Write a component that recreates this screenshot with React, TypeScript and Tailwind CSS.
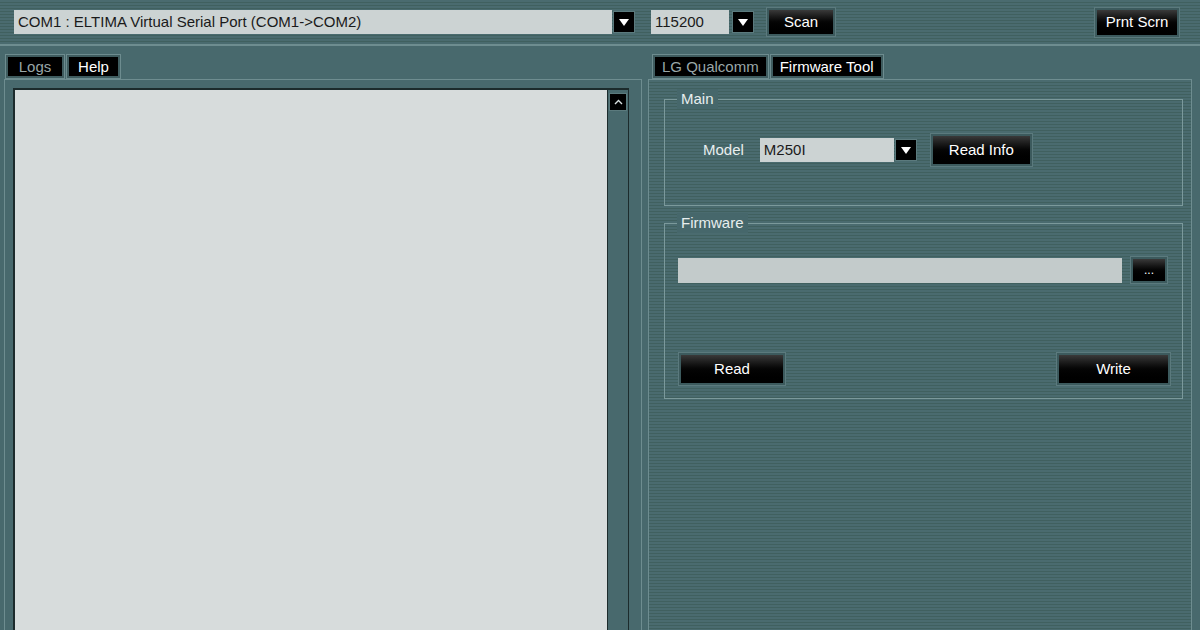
import { ReactNode } from "react";

const stripes =
  "bg-[repeating-linear-gradient(180deg,#4a6b6f_0px,#4a6b6f_2px,#40605f_2px,#40605f_3px)]";

function BlackButton({ children, className = "" }: { children: ReactNode; className?: string }) {
  return (
    <div className={`flex items-center justify-center border border-[#5b7a7d] p-[2px] bg-[#3c5a5d] ${className}`}>
      <div className="flex h-full w-full items-center justify-center bg-gradient-to-b from-[#3a3a3a] via-[#050505] to-[#000000] text-[15px] text-white">
        {children}
      </div>
    </div>
  );
}

function DropArrow({ className = "" }: { className?: string }) {
  return (
    <div className={`flex items-center justify-center border border-[#5b7a7d] bg-black ${className}`}>
      <svg width="10" height="7" viewBox="0 0 10 7">
        <path d="M0 0 L10 0 L5 7 Z" fill="#ffffff" />
      </svg>
    </div>
  );
}

function Tab({ label, active, className = "" }: { label: string; active?: boolean; className?: string }) {
  return (
    <div className="border border-[#6d8c8f] bg-[#3f5c5f] p-[2px]">
      <div
        className={`flex h-[19px] items-center justify-center bg-black px-[7px] text-[15px] leading-none ${
          active ? "text-white" : "text-[#9aa7a8]"
        } ${className}`}
      >
        {label}
      </div>
    </div>
  );
}

function GroupBox({ title, className = "", children }: { title: string; className?: string; children: ReactNode }) {
  return (
    <div className={`relative border border-[#7b999b] ${className}`}>
      <span className="absolute left-[12px] top-[-11px] bg-[#46676b] px-[4px] text-[15px] leading-[20px] text-[#e8eeee]">
        {title}
      </span>
      {children}
    </div>
  );
}

export default function App() {
  return (
    <div
      className="flex h-[630px] w-[1200px] flex-col overflow-hidden bg-[#48696d] text-[15px]"
      style={{ fontFamily: '"Liberation Sans", Arial, sans-serif' }}
    >
      {/* toolbar */}
      <div className={`flex h-[46px] shrink-0 items-center border-b-2 border-[#6e8d90] px-[14px] ${stripes}`}>
        <div className="flex h-[24px] w-[598px] items-center bg-[#ccd3d3] px-[4px] text-[15px] text-[#1a1a1a]">
          COM1 : ELTIMA Virtual Serial Port (COM1-&gt;COM2)
        </div>
        <DropArrow className="ml-[1px] h-[22px] w-[22px]" />
        <div className="ml-[16px] flex h-[24px] w-[78px] items-center bg-[#ccd3d3] px-[4px] text-[15px] text-[#1a1a1a]">
          115200
        </div>
        <DropArrow className="ml-[3px] h-[22px] w-[22px]" />
        <BlackButton className="ml-[12px] h-[30px] w-[70px]">Scan</BlackButton>
        <div className="flex-1" />
        <BlackButton className="mr-[6px] h-[31px] w-[86px]">Prnt Scrn</BlackButton>
      </div>

      <div className="flex min-h-0 flex-1 pt-[8px]">
        {/* left: logs */}
        <div className="flex w-[642px] shrink-0 flex-col pl-[4px]">
          <div className="flex gap-[1px] pl-[1px]">
            <Tab label="Logs" className="w-[54px]" />
            <Tab label="Help" active className="w-[49px]" />
          </div>
          <div className="flex min-h-0 flex-1 border-l border-t border-r border-[#6e8d90] pl-[8px] pt-[8px] pr-[12px]">
            <div className="flex flex-1 border-l-2 border-t-2 border-[#1c2b2c]">
              <div className="flex-1 bg-[#d7dcdc]" />
              <div className="flex w-[22px] flex-col items-center border-l border-r border-[#1c2b2c] bg-[#48696d] pt-[3px]">
                <div className="flex h-[18px] w-[18px] items-center justify-center border border-[#5b7a7d] bg-black">
                  <svg width="9" height="6" viewBox="0 0 9 6">
                    <path d="M1 5 L4.5 1.5 L8 5" fill="none" stroke="#d8e0e0" strokeWidth="1.4" />
                  </svg>
                </div>
              </div>
            </div>
          </div>
        </div>

        {/* right: tools */}
        <div className="flex flex-1 flex-col pl-[6px] pr-[8px]">
          <div className="flex gap-[1px] pl-[4px]">
            <Tab label="LG Qualcomm" />
            <Tab label="Firmware Tool" active className="px-[4px]" />
          </div>
          <div className={`flex-1 border-l border-t border-r border-[#6e8d90] pl-[15px] pr-[8px] pt-[19px] ${stripes}`}>
            <GroupBox title="Main" className="h-[107px]">
              <div className="flex items-center pl-[38px] pt-[33px]">
                <span className="text-[15px] text-[#e8eeee]">Model</span>
                <div className="ml-[16px] flex h-[24px] w-[134px] items-center bg-[#ccd3d3] px-[4px] text-[15px] text-[#1a1a1a]">
                  M250I
                </div>
                <DropArrow className="ml-[1px] h-[22px] w-[22px]" />
                <BlackButton className="ml-[13px] h-[34px] w-[103px]">Read Info</BlackButton>
              </div>
            </GroupBox>

            <GroupBox title="Firmware" className="mt-[17px] h-[176px]">
              <div className="flex items-center pl-[13px] pr-[14px] pt-[32px]">
                <div className="h-[25px] flex-1 bg-[#c3cbcb]" />
                <BlackButton className="ml-[8px] h-[28px] w-[38px]">
                  <span className="text-[12px] leading-none">...</span>
                </BlackButton>
              </div>
              <div className="flex justify-between pl-[13px] pr-[11px] pt-[68px]">
                <BlackButton className="h-[34px] w-[108px]">Read</BlackButton>
                <BlackButton className="h-[34px] w-[115px]">Write</BlackButton>
              </div>
            </GroupBox>
          </div>
        </div>
      </div>
    </div>
  );
}
